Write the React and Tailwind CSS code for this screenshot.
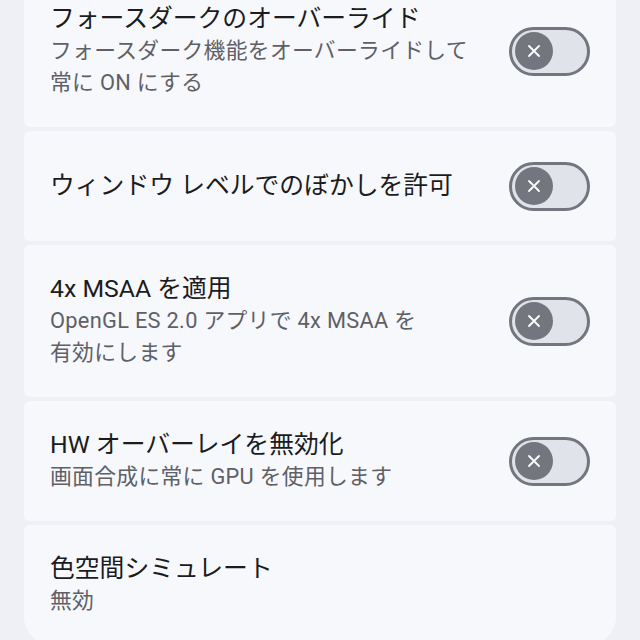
import React from 'react';

const font = { fontFamily: 'Roboto, "Noto Sans CJK JP", sans-serif' };

const Toggle = () => (
  <div className="flex h-[49px] w-[81px] shrink-0 items-center rounded-full border-[3px] border-[#73767e] bg-[#e1e3ea] pl-[3px]">
    <div className="flex h-[38px] w-[38px] items-center justify-center rounded-full bg-[#73767e]">
      <svg width="16" height="16" viewBox="0 0 16 16" fill="none" stroke="white" strokeWidth="1.8" strokeLinecap="round">
        <path d="M3 3 L13 13 M13 3 L3 13" />
      </svg>
    </div>
  </div>
);

const Item = ({ title, lines = [], toggle = true, className = '' }) => (
  <div className={`flex items-center gap-6 bg-[#f7f8fc] py-7 pl-[26px] pr-[26px] ${className}`}>
    <div className="flex-1">
      <div className="text-[24.8px] leading-[32px] text-[#1b1c20]">{title}</div>
      {lines.map((l, i) => (
        <div key={i} className="text-[21.8px] leading-[32px] tracking-[0.3px] text-[#5e6066]">{l}</div>
      ))}
    </div>
    {toggle && <Toggle />}
  </div>
);

export default function App() {
  return (
    <div className="h-[640px] w-[640px] overflow-hidden bg-[#eef0f5]" style={font}>
      <div className="mx-6 -mt-[25px] flex flex-col gap-1">
        <Item
          className="rounded-t-[28px] rounded-b-[6px]"
          title="フォースダークのオーバーライド"
          lines={['フォースダーク機能をオーバーライドして', '常に ON にする']}
        />
        <Item className="min-h-[110px] rounded-[6px]" title="ウィンドウ レベルでのぼかしを許可" />
        <Item
          className="rounded-[6px]"
          title="4x MSAA を適用"
          lines={['OpenGL ES 2.0 アプリで 4x MSAA を', '有効にします']}
        />
        <Item
          className="rounded-[6px]"
          title="HW オーバーレイを無効化"
          lines={['画面合成に常に GPU を使用します']}
        />
        <Item
          className="rounded-t-[6px] rounded-b-[28px]"
          title="色空間シミュレート"
          lines={['無効']}
          toggle={false}
        />
      </div>
    </div>
  );
}
